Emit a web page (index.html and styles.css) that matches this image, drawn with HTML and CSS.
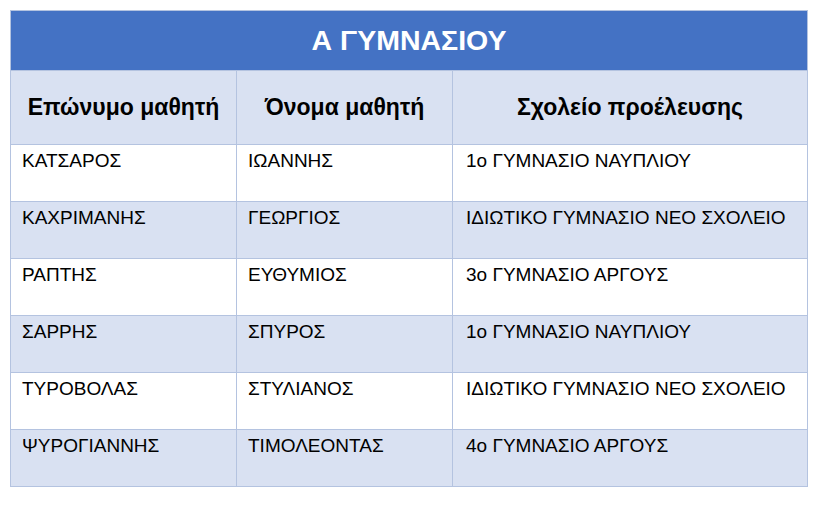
FILE: index.html
```html
<!DOCTYPE html>
<html lang="el">
<head>
<meta charset="utf-8">
<link rel="stylesheet" href="styles.css">
</head>
<body>
<table class="roster">
  <colgroup>
    <col class="c1"><col class="c2"><col class="c3">
  </colgroup>
  <thead>
    <tr><th class="title" colspan="3">Α ΓΥΜΝΑΣΙΟΥ</th></tr>
    <tr class="head">
      <th>Επώνυμο μαθητή</th>
      <th>Όνομα μαθητή</th>
      <th>Σχολείο προέλευσης</th>
    </tr>
  </thead>
  <tbody>
    <tr><td>ΚΑΤΣΑΡΟΣ</td><td>ΙΩΑΝΝΗΣ</td><td>1ο ΓΥΜΝΑΣΙΟ ΝΑΥΠΛΙΟΥ</td></tr>
    <tr class="alt"><td>ΚΑΧΡΙΜΑΝΗΣ</td><td>ΓΕΩΡΓΙΟΣ</td><td>ΙΔΙΩΤΙΚΟ ΓΥΜΝΑΣΙΟ ΝΕΟ ΣΧΟΛΕΙΟ</td></tr>
    <tr><td>ΡΑΠΤΗΣ</td><td>ΕΥΘΥΜΙΟΣ</td><td>3ο ΓΥΜΝΑΣΙΟ ΑΡΓΟΥΣ</td></tr>
    <tr class="alt"><td>ΣΑΡΡΗΣ</td><td>ΣΠΥΡΟΣ</td><td>1ο ΓΥΜΝΑΣΙΟ ΝΑΥΠΛΙΟΥ</td></tr>
    <tr><td>ΤΥΡΟΒΟΛΑΣ</td><td>ΣΤΥΛΙΑΝΟΣ</td><td>ΙΔΙΩΤΙΚΟ ΓΥΜΝΑΣΙΟ ΝΕΟ ΣΧΟΛΕΙΟ</td></tr>
    <tr class="alt"><td>ΨΥΡΟΓΙΑΝΝΗΣ</td><td>ΤΙΜΟΛΕΟΝΤΑΣ</td><td>4ο ΓΥΜΝΑΣΙΟ ΑΡΓΟΥΣ</td></tr>
  </tbody>
</table>
</body>
</html>
```
FILE: styles.css
```css
html, body {
  margin: 0;
  padding: 0;
  background: #ffffff;
}
body {
  padding: 10px 0 0 10px;
  font-family: "Liberation Sans", Arial, sans-serif;
}
.roster {
  border-collapse: collapse;
  table-layout: fixed;
  width: 797px;
  color: #000;
}
.c1 { width: 226px; }
.c2 { width: 216px; }
.c3 { width: 355px; }
.roster th, .roster td {
  border: 1px solid #b4c3e0;
  padding: 0;
}
.title {
  background: #4472c4;
  border-color: #4472c4;
  color: #ffffff;
  font-weight: bold;
  font-size: 28.5px;
  height: 59px;
  text-align: center;
  vertical-align: middle;
  padding-top: 1px;
}
.head th {
  background: #d9e1f2;
  font-weight: bold;
  font-size: 23px;
  height: 73px;
  text-align: center;
  vertical-align: middle;
}
.roster td {
  height: 57px;
  vertical-align: top;
  font-size: 19px;
  padding: 5px 0 0 11px;
  box-sizing: border-box;
  background: #ffffff;
}
.roster td:nth-child(3) { padding-left: 13px; }
.alt td { background: #d9e1f2; }
```
